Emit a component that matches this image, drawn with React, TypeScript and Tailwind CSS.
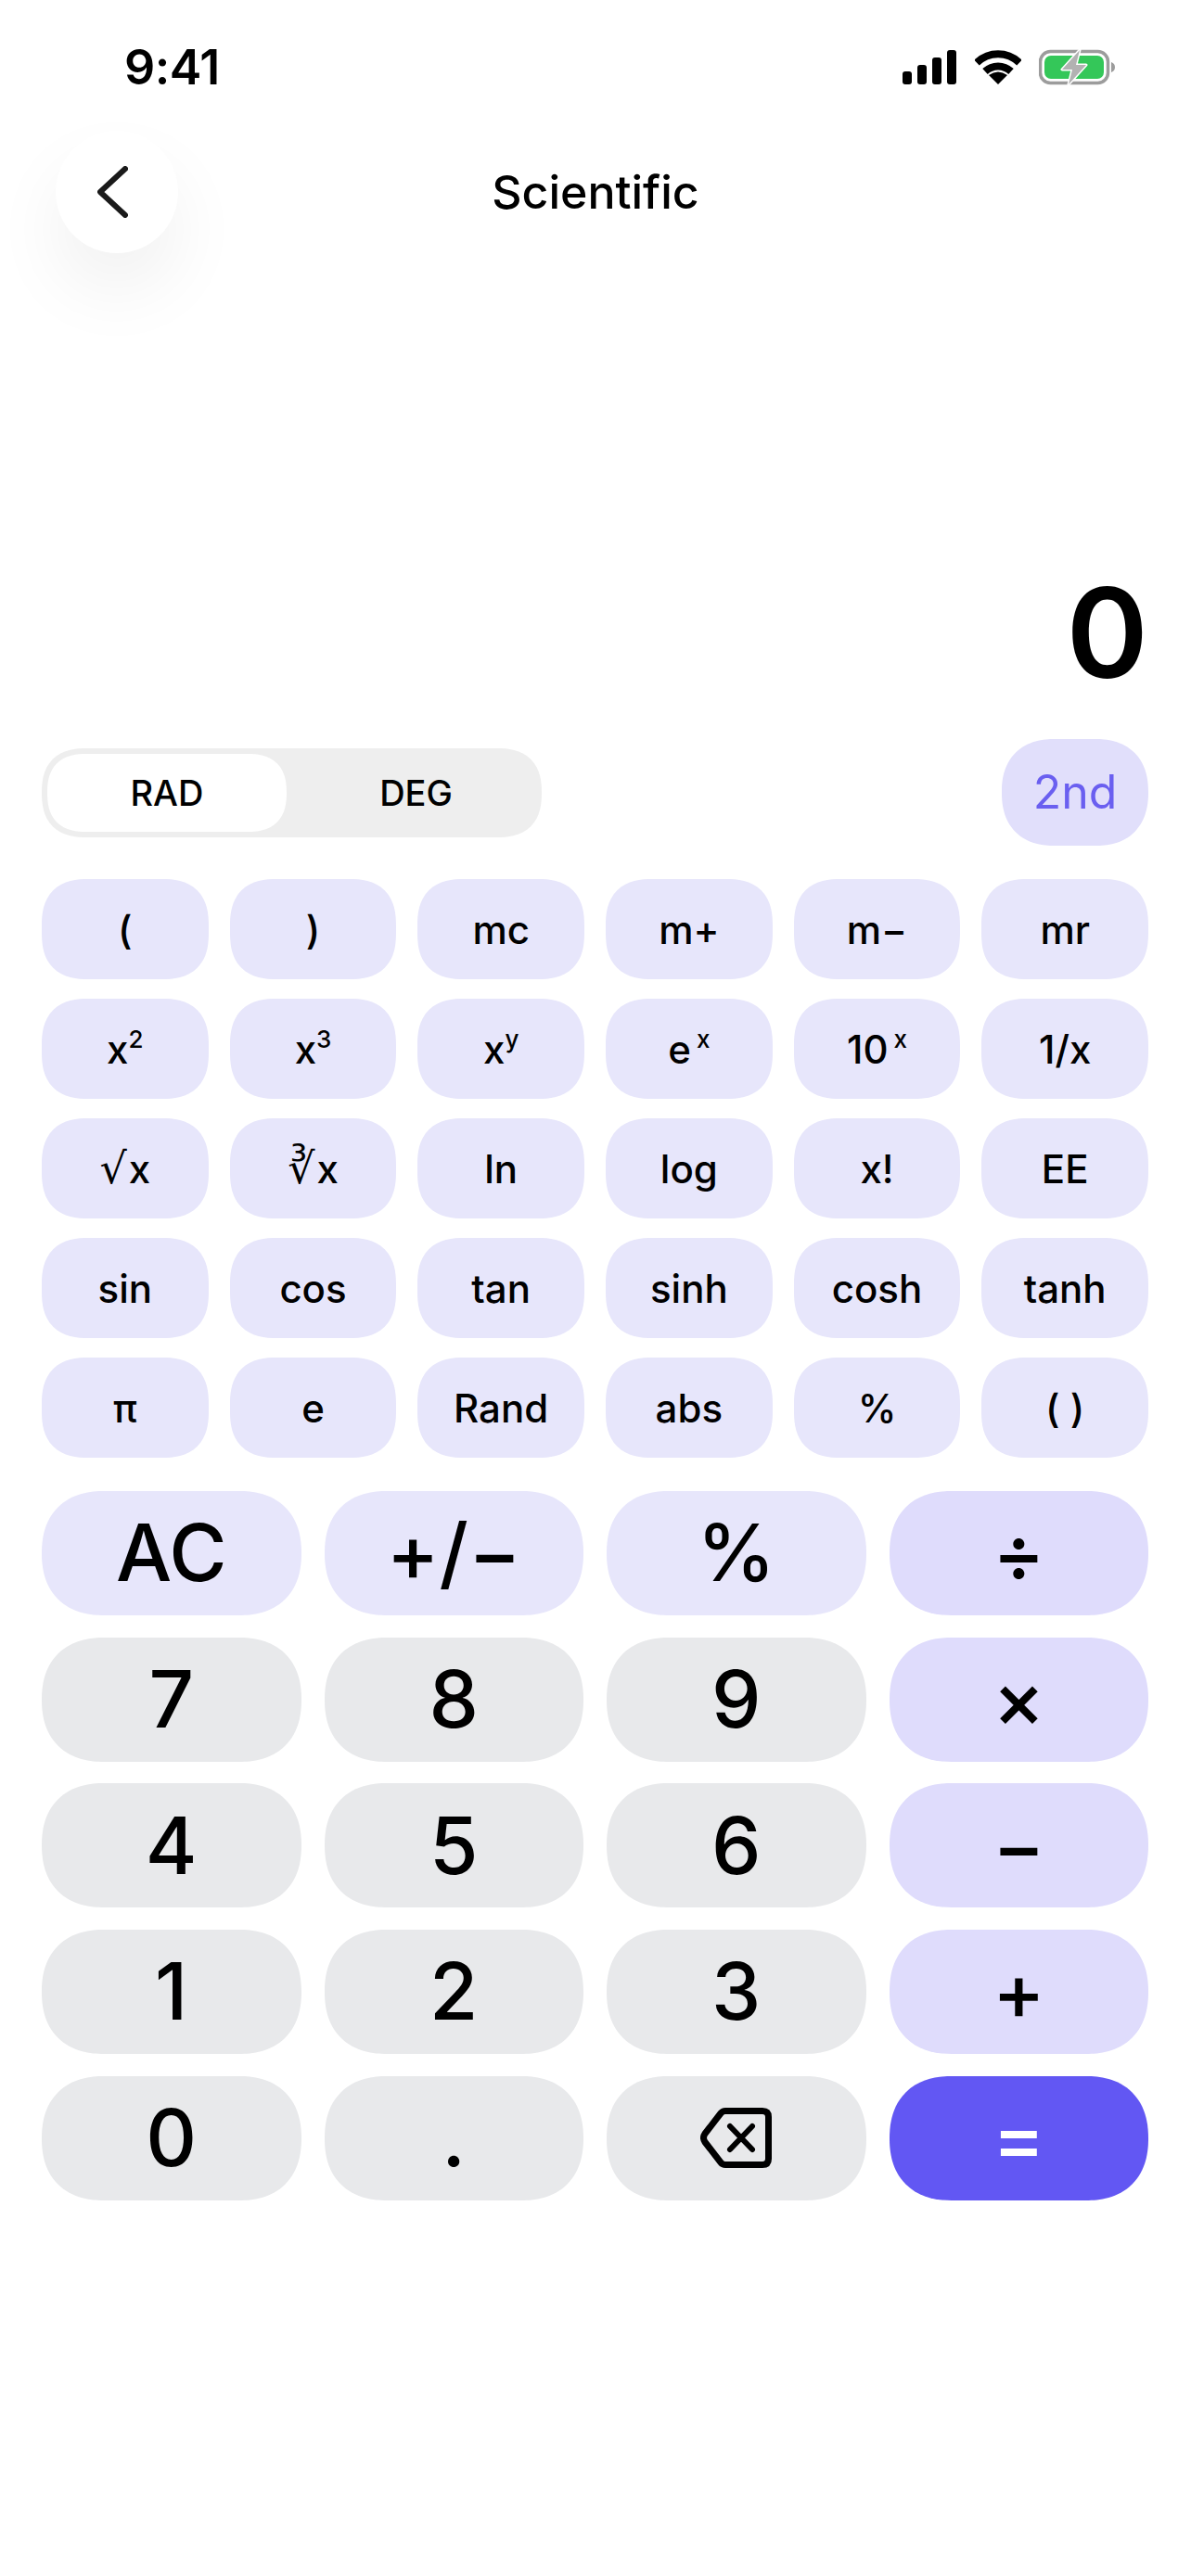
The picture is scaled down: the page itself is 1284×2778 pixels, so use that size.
import React from 'react';

const Sup = ({ children, gap = '' }: { children: React.ReactNode; gap?: string }) => (
  <span className={`text-[26px] leading-none relative -top-[17px] ${gap}`}>{children}</span>
);

const Radical = ({ children }: { children: string }) => (
  <span className="font-['DejaVu_Sans',sans-serif] font-normal text-[46px] leading-none mr-[2px]">{children}</span>
);

const scientificKeys: React.ReactNode[] = [
  '(', ')', 'mc', 'm+', 'm−', 'mr',
  <>x<Sup>2</Sup></>,
  <>x<Sup>3</Sup></>,
  <>x<Sup>y</Sup></>,
  <>e<Sup gap="ml-[6px]">x</Sup></>,
  <>10<Sup gap="ml-[6px]">x</Sup></>,
  '1/x',
  <><Radical>√</Radical>x</>,
  <><Radical>∛</Radical>x</>,
  'ln', 'log', 'x!', 'EE',
  'sin', 'cos', 'tan', 'sinh', 'cosh', 'tanh',
  'π', 'e', 'Rand', 'abs', '%', '( )',
];

const mainKeys = [
  { label: 'AC', kind: 'fn' },
  { label: '+/−', kind: 'fn' },
  { label: '%', kind: 'fn' },
  { label: '÷', kind: 'op' },
  { label: '7', kind: 'num' },
  { label: '8', kind: 'num' },
  { label: '9', kind: 'num' },
  { label: '×', kind: 'op' },
  { label: '4', kind: 'num' },
  { label: '5', kind: 'num' },
  { label: '6', kind: 'num' },
  { label: '−', kind: 'op' },
  { label: '1', kind: 'num' },
  { label: '2', kind: 'num' },
  { label: '3', kind: 'num' },
  { label: '+', kind: 'op' },
  { label: '0', kind: 'num' },
  { label: '.', kind: 'num' },
  { label: 'del', kind: 'num' },
  { label: '=', kind: 'eq' },
];

function SignalIcon() {
  return (
    <svg width="58" height="37" viewBox="0 0 58 37" fill="#000">
      <rect x="0" y="23" width="10" height="14" rx="3" />
      <rect x="16" y="16" width="10" height="21" rx="3" />
      <rect x="32" y="8" width="10" height="29" rx="3" />
      <rect x="48" y="0" width="10" height="37" rx="3" />
    </svg>
  );
}

function WifiIcon() {
  return (
    <svg width="50" height="37" viewBox="0 0 50 37" fill="none" stroke="#000" strokeWidth="8">
      <path d="M2 13.5 C15 1 35 1 48 13.5" />
      <path d="M11 23 C19 15.5 31 15.5 39 23" />
      <path d="M25 37 L15 27 Q25 20 35 27 Z" fill="#000" stroke="none" />
    </svg>
  );
}

function BatteryIcon() {
  return (
    <svg width="82" height="39" viewBox="0 0 82 39" fill="none">
      <rect x="1.5" y="2.5" width="73" height="34" rx="11" stroke="#9c9c9c" strokeWidth="3.5" />
      <rect x="6" y="7" width="64" height="25" rx="7" fill="#34C759" />
      <path d="M78 14 C81 15 82 17 82 19.5 C82 22 81 24 78 25 Z" fill="#9c9c9c" />
      <path
        d="M44 1 L25 22 L36 22 L32 38 L51 17 L40 17 Z"
        fill="#b2b2b2"
        stroke="#ffffff"
        strokeWidth="3"
        strokeLinejoin="round"
        paintOrder="stroke"
      />
    </svg>
  );
}

function BackspaceIcon() {
  return (
    <svg width="77" height="65" viewBox="0 0 77 65" fill="none" stroke="#000" strokeLinecap="round" strokeLinejoin="round">
      <path d="M27 3.5 H67 Q73.5 3.5 73.5 10 V55 Q73.5 61.5 67 61.5 H27 Q24 61.5 22 59 L5 37 Q2 32.5 5 28 L22 6 Q24 3.5 27 3.5 Z" strokeWidth="7" />
      <path d="M32 20 L56 45 M56 20 L32 45" strokeWidth="6" />
    </svg>
  );
}

export default function App() {
  return (
    <div className="w-[1284px] h-[2778px] bg-white overflow-hidden font-['Inter',sans-serif] text-black">
      {/* status bar */}
      <div className="h-[141px] pt-[53px] pl-[134px] pr-[82px] flex items-start justify-between">
        <span className="text-[52px] leading-[40px] font-semibold tracking-[-0.5px]">9:41</span>
        <div className="flex items-center">
          <SignalIcon />
          <div className="ml-[20px]"><WifiIcon /></div>
          <div className="ml-[19px]"><BatteryIcon /></div>
        </div>
      </div>

      {/* header */}
      <div className="h-[132px] pl-[60px] pr-[60px] grid grid-cols-[1fr_auto_1fr] items-center">
        <div className="w-[132px] h-[132px] rounded-full bg-white shadow-[0_40px_80px_rgba(0,0,0,0.06)] flex items-center justify-center">
          <svg width="33" height="56" viewBox="0 0 33 56" fill="none" stroke="#1a1a1a" strokeWidth="6" strokeLinecap="round" strokeLinejoin="round" className="-ml-[10px]">
            <path d="M30 3 L3 28 L30 53" />
          </svg>
        </div>
        <span className="text-[50px] leading-none font-medium">Scientific</span>
        <div />
      </div>

      {/* display */}
      <div className="mt-[342px] h-[134px] pr-[46px] text-right text-[134px] leading-[134px] font-semibold">0</div>

      {/* mode row */}
      <div className="mt-[48px] pl-[45px] pr-[46px] h-[115px] flex items-center justify-between">
        <div className="w-[539px] h-[96px] rounded-[48px] [corner-shape:superellipse(1.3)] bg-[#eeeeee] p-[6px] flex items-center text-[38px] font-medium">
          <div className="w-[258px] h-[84px] rounded-[42px] [corner-shape:superellipse(1.3)] bg-white flex items-center justify-center pt-[2px]">RAD</div>
          <div className="flex-1 text-center pl-[10px] pt-[2px]">DEG</div>
        </div>
        <div className="w-[158px] h-[115px] rounded-[57px] [corner-shape:superellipse(1.2)] bg-[#e1dffb] text-[#6a5ff0] text-[50px] flex items-center justify-center">2nd</div>
      </div>

      {/* scientific keys */}
      <div className="mt-[36px] pl-[45px] pr-[46px] grid grid-cols-6 gap-x-[23px] gap-y-[21px]">
        {scientificKeys.map((key, i) => (
          <div key={i} className="h-[108px] rounded-[50px] [corner-shape:superellipse(1.3)] bg-[#e7e6fb] text-[42px] font-medium flex items-center justify-center">
            <span>{key}</span>
          </div>
        ))}
      </div>

      {/* main keys */}
      <div className="mt-[36px] pl-[45px] pr-[46px] grid grid-cols-4 gap-x-[25px] gap-y-[23.7px]">
        {mainKeys.map(key => (
          <div
            key={key.label}
            className={`h-[134px] rounded-[67px] [corner-shape:superellipse(1.2)] flex items-center justify-center text-[85px] font-medium ${
              key.kind === 'fn'
                ? 'bg-[#e7e6fb]'
                : key.kind === 'op'
                ? 'bg-[#dfdcfc]'
                : key.kind === 'eq'
                ? 'bg-[#6257f3] text-white'
                : 'bg-[#e8e9eb]'
            }`}
          >
            {key.label === 'del' ? <BackspaceIcon /> : key.label}
          </div>
        ))}
      </div>
    </div>
  );
}
